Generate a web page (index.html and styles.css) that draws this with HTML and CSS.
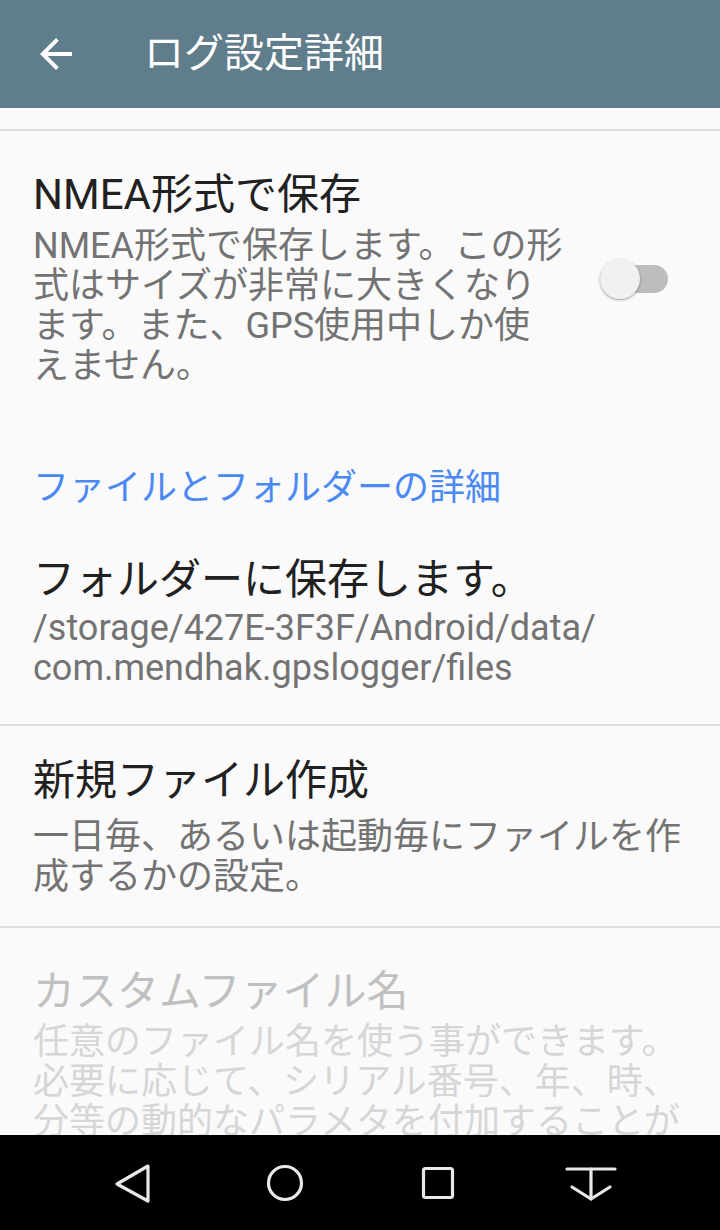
FILE: index.html
```html
<!DOCTYPE html>
<html lang="ja">
<head>
<meta charset="utf-8">
<title>ログ設定詳細</title>
<link rel="stylesheet" href="styles.css">
</head>
<body>
<div class="screen">
  <header class="appbar">
    <svg class="appbar-back" width="48" height="48" viewBox="0 0 24 24" aria-hidden="true">
      <path d="M20 11H7.83l5.59-5.59L12 4l-8 8 8 8 1.41-1.41L7.83 13H20v-2z" fill="#ffffff"/>
    </svg>
    <h1 class="appbar-title">ログ設定詳細</h1>
  </header>

  <main class="content">
    <div class="prev-tail"></div>
    <div class="divider"></div>

    <section class="pref pref-switch">
      <div class="pref-text">
        <div class="pref-title">NMEA形式で保存</div>
        <div class="pref-summary pref-summary-first">NMEA形式で保存します。この形式はサイズが非常に大きくなります。また、GPS使用中しか使えません。</div>
      </div>
      <div class="switch">
        <div class="switch-track"></div>
        <div class="switch-thumb"></div>
      </div>
    </section>

    <div class="category">ファイルとフォルダーの詳細</div>

    <section class="pref pref-folder">
      <div class="pref-text">
        <div class="pref-title">フォルダーに保存します。</div>
        <div class="pref-summary pref-summary-path">/storage/427E-3F3F/Android/data/<br>com.mendhak.gpslogger/files</div>
      </div>
    </section>
    <div class="divider"></div>

    <section class="pref pref-newfile">
      <div class="pref-text">
        <div class="pref-title">新規ファイル作成</div>
        <div class="pref-summary pref-summary-newfile">一日毎、あるいは起動毎にファイルを作成するかの設定。</div>
      </div>
    </section>
    <div class="divider"></div>

    <section class="pref pref-disabled">
      <div class="pref-text">
        <div class="pref-title">カスタムファイル名</div>
        <div class="pref-summary pref-summary-custom">任意のファイル名を使う事ができます。必要に応じて、シリアル番号、年、時、分等の動的なパラメタを付加することができます。</div>
      </div>
    </section>
  </main>

  <nav class="navbar">
    <div class="nav-slot">
      <svg width="60" height="60" viewBox="0 0 60 60" aria-hidden="true">
        <path d="M46 13 L15 31 L46 48 Z" fill="none" stroke="#e8e8e8" stroke-width="3.2" stroke-linejoin="round"/>
      </svg>
    </div>
    <div class="nav-slot">
      <svg width="60" height="60" viewBox="0 0 60 60" aria-hidden="true">
        <circle cx="30" cy="30" r="16.5" fill="none" stroke="#e8e8e8" stroke-width="3.2"/>
      </svg>
    </div>
    <div class="nav-slot">
      <svg width="60" height="60" viewBox="0 0 60 60" aria-hidden="true">
        <rect x="15.5" y="15.5" width="29" height="29" rx="2" fill="none" stroke="#e8e8e8" stroke-width="3.2"/>
      </svg>
    </div>
    <div class="nav-slot">
      <svg width="60" height="60" viewBox="0 0 60 60" aria-hidden="true">
        <path d="M6 16 H54" fill="none" stroke="#e8e8e8" stroke-width="3.2" stroke-linecap="round"/>
        <path d="M30 16 V46" fill="none" stroke="#e8e8e8" stroke-width="3.2" stroke-linecap="round"/>
        <path d="M11 34 L30 46 L49 34" fill="none" stroke="#e8e8e8" stroke-width="3.2" stroke-linecap="round" stroke-linejoin="round"/>
      </svg>
    </div>
  </nav>
</div>
</body>
</html>
```

FILE: styles.css
```css
html, body {
  margin: 0;
  padding: 0;
  background: #fafafa;
}

body {
  font-family: Roboto, "Noto Sans CJK JP", "Noto Sans", sans-serif;
}

.screen {
  width: 720px;
  height: 1230px;
  display: flex;
  flex-direction: column;
  overflow: hidden;
  background: #fafafa;
}

/* App bar */
.appbar {
  flex: 0 0 108px;
  height: 108px;
  background: #607d8b;
  display: flex;
  align-items: center;
  padding-left: 32px;
  box-sizing: border-box;
}

.appbar-back {
  flex: 0 0 48px;
  display: block;
}

.appbar-title {
  margin: 0 0 0 64px;
  font-size: 40px;
  font-weight: 400;
  line-height: 48px;
  color: #ffffff;
}

/* Scrolling content */
.content {
  flex: 1 1 auto;
  overflow: hidden;
  display: flex;
  flex-direction: column;
}

.prev-tail {
  flex: 0 0 21px;
}

.divider {
  flex: 0 0 2px;
  background: #dddddd;
}

.pref {
  display: flex;
  align-items: center;
  padding: 0 32px 0 33px;
  flex: 0 0 auto;
}

.pref-text {
  flex: 1 1 auto;
  min-width: 0;
}

.pref-title {
  font-size: 42px;
  line-height: 48px;
  color: #212121;
}

.pref-summary {
  font-size: 36px;
  line-height: 40px;
  color: #737373;
}

/* Item 1: switch preference */
.pref-switch {
  padding: 40px 52px 41px 33px;
}

.pref-switch .pref-text {
  flex: 0 0 531px;
}

.pref-summary-first {
  margin-top: 7px;
}

.switch {
  position: relative;
  width: 68px;
  height: 40px;
  margin-left: 36px;
  flex: 0 0 68px;
}

.switch-track {
  position: absolute;
  left: 0;
  top: 6px;
  width: 68px;
  height: 28px;
  border-radius: 14px;
  background: #bdbdbd;
}

.switch-thumb {
  position: absolute;
  left: 0;
  top: 0;
  width: 40px;
  height: 40px;
  border-radius: 50%;
  background: #f1f1f1;
  box-shadow: 0 1px 3px rgba(0, 0, 0, 0.28), 0 1px 1px rgba(0, 0, 0, 0.12);
}

/* Category header */
.category {
  padding: 41px 32px 0 33px;
  font-size: 36px;
  line-height: 40px;
  color: #4a89f3;
}

/* Item 2: folder */
.pref-folder {
  padding-top: 48px;
  padding-bottom: 36px;
}

.pref-summary-path {
  margin-top: 4px;
}

/* Item 3: new file */
.pref-newfile {
  padding-top: 31px;
  padding-bottom: 29px;
}

.pref-summary-newfile {
  margin-top: 12px;
}

/* Item 4: disabled */
.pref-disabled {
  padding-top: 40px;
}

.pref-disabled .pref-title {
  color: #c0c0c0;
}

.pref-disabled .pref-summary {
  color: #d6d6d6;
}

.pref-summary-custom {
  margin-top: 6px;
}

/* Navigation bar */
.navbar {
  flex: 0 0 95px;
  height: 95px;
  background: #000000;
  display: flex;
  align-items: center;
  padding: 0 53px 0 55px;
}

.nav-slot {
  flex: 1 1 0;
  display: flex;
  justify-content: center;
  align-items: center;
}

.nav-slot svg {
  display: block;
}
```
